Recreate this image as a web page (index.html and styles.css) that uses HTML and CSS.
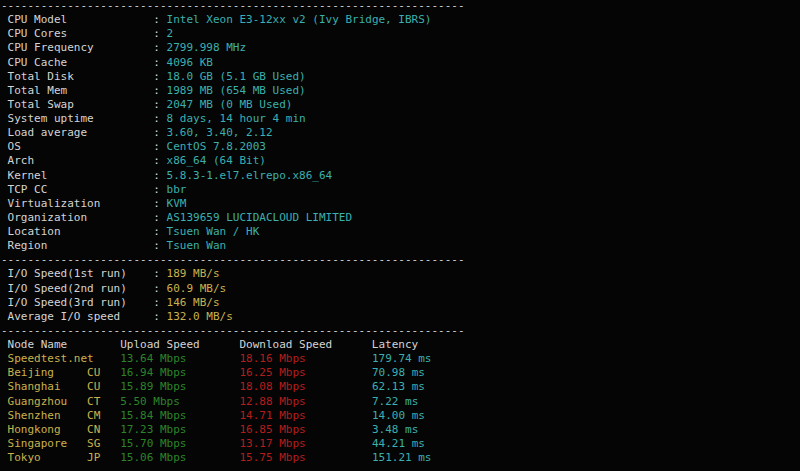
FILE: index.html
```html
<!DOCTYPE html>
<html>
<head>
<meta charset="utf-8">
<link rel="stylesheet" href="styles.css">
</head>
<body>
<pre class="term"><span class="l">----------------------------------------------------------------------</span>
<span class="l"> CPU Model             : </span><span class="c">Intel Xeon E3-12xx v2 (Ivy Bridge, IBRS)</span>
<span class="l"> CPU Cores             : </span><span class="c">2</span>
<span class="l"> CPU Frequency         : </span><span class="c">2799.998 MHz</span>
<span class="l"> CPU Cache             : </span><span class="c">4096 KB</span>
<span class="l"> Total Disk            : </span><span class="c">18.0 GB (5.1 GB Used)</span>
<span class="l"> Total Mem             : </span><span class="c">1989 MB (654 MB Used)</span>
<span class="l"> Total Swap            : </span><span class="c">2047 MB (0 MB Used)</span>
<span class="l"> System uptime         : </span><span class="c">8 days, 14 hour 4 min</span>
<span class="l"> Load average          : </span><span class="c">3.60, 3.40, 2.12</span>
<span class="l"> OS                    : </span><span class="c">CentOS 7.8.2003</span>
<span class="l"> Arch                  : </span><span class="c">x86_64 (64 Bit)</span>
<span class="l"> Kernel                : </span><span class="c">5.8.3-1.el7.elrepo.x86_64</span>
<span class="l"> TCP CC                : </span><span class="c">bbr</span>
<span class="l"> Virtualization        : </span><span class="c">KVM</span>
<span class="l"> Organization          : </span><span class="c">AS139659 LUCIDACLOUD LIMITED</span>
<span class="l"> Location              : </span><span class="c">Tsuen Wan / HK</span>
<span class="l"> Region                : </span><span class="c">Tsuen Wan</span>
<span class="l">----------------------------------------------------------------------</span>
<span class="l"> I/O Speed(1st run)    : </span><span class="y">189 MB/s</span>
<span class="l"> I/O Speed(2nd run)    : </span><span class="y">60.9 MB/s</span>
<span class="l"> I/O Speed(3rd run)    : </span><span class="y">146 MB/s</span>
<span class="l"> Average I/O speed     : </span><span class="y">132.0 MB/s</span>
<span class="l">----------------------------------------------------------------------</span>
<span class="l"> Node Name        Upload Speed      Download Speed      Latency</span>
<span class="y"> Speedtest.net    </span><span class="g">13.64 Mbps        </span><span class="r">18.16 Mbps          </span><span class="c">179.74 ms</span>
<span class="y"> Beijing     CU   </span><span class="g">16.94 Mbps        </span><span class="r">16.25 Mbps          </span><span class="c">70.98 ms</span>
<span class="y"> Shanghai    CU   </span><span class="g">15.89 Mbps        </span><span class="r">18.08 Mbps          </span><span class="c">62.13 ms</span>
<span class="y"> Guangzhou   CT   </span><span class="g">5.50 Mbps         </span><span class="r">12.88 Mbps          </span><span class="c">7.22 ms</span>
<span class="y"> Shenzhen    CM   </span><span class="g">15.84 Mbps        </span><span class="r">14.71 Mbps          </span><span class="c">14.00 ms</span>
<span class="y"> Hongkong    CN   </span><span class="g">17.23 Mbps        </span><span class="r">16.85 Mbps          </span><span class="c">3.48 ms</span>
<span class="y"> Singapore   SG   </span><span class="g">15.70 Mbps        </span><span class="r">13.17 Mbps          </span><span class="c">44.21 ms</span>
<span class="y"> Tokyo       JP   </span><span class="g">15.06 Mbps        </span><span class="r">15.75 Mbps          </span><span class="c">151.21 ms</span></pre>
</body>
</html>
```
FILE: styles.css
```css
html, body {
  margin: 0;
  padding: 0;
  background: #050505;
  overflow: hidden;
}
.term {
  margin: -1px 0 0 0;
  padding: 0 0 0 1px;
  font-family: "DejaVu Sans Mono", "Liberation Mono", monospace;
  font-size: 11px;
  line-height: 14.125px;
  color: #d6d6d6;
  white-space: pre;
}
.l { color: #d4d4d4; }
.c { color: #3bb0ae; }
.y { color: #c9b24e; }
.g { color: #2c8429; }
.r { color: #b51d1d; }
```
